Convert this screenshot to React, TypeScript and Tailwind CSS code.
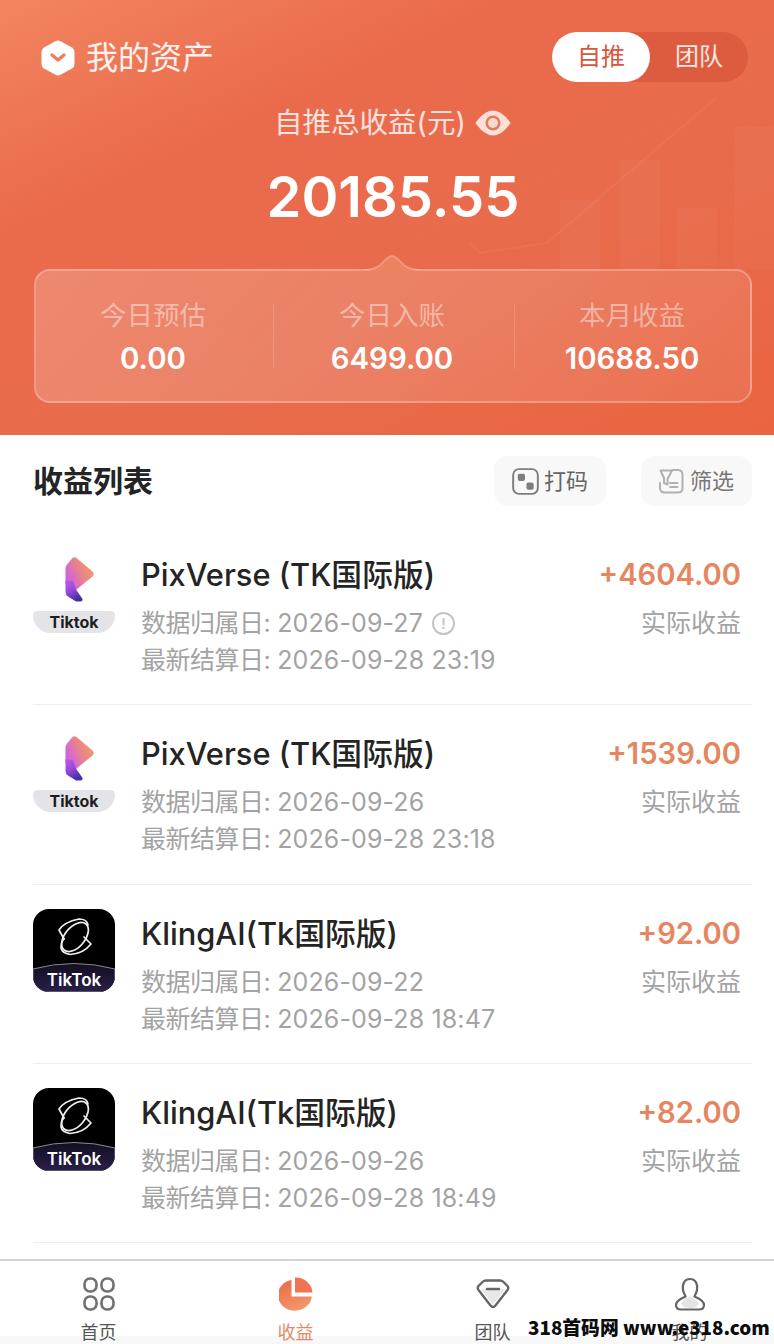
import React from "react";

const cjk = "font-['Inter','Noto_Sans_CJK_SC',sans-serif]";

type Row = { logo: "pix" | "kling"; title: string; amount: string; day: string; settled: string; info?: boolean };

const rows: Row[] = [
  { logo: "pix", title: "PixVerse (TK国际版)", amount: "+4604.00", day: "2026-09-27", settled: "2026-09-28 23:19", info: true },
  { logo: "pix", title: "PixVerse (TK国际版)", amount: "+1539.00", day: "2026-09-26", settled: "2026-09-28 23:18" },
  { logo: "kling", title: "KlingAI(Tk国际版)", amount: "+92.00", day: "2026-09-22", settled: "2026-09-28 18:47" },
  { logo: "kling", title: "KlingAI(Tk国际版)", amount: "+82.00", day: "2026-09-26", settled: "2026-09-28 18:49" },
];

function PixLogo({ id }: { id: string }) {
  return (
    <div className="relative h-[84px] w-[82px] shrink-0">
      <svg viewBox="0 0 82 84" className="absolute left-0 top-0 h-[84px] w-[82px]">
        <defs>
          <linearGradient id={`${id}a`} x1="1" y1="0.1" x2="0" y2="0.6">
            <stop offset="0" stopColor="#f0a066" />
            <stop offset="0.5" stopColor="#ea8488" />
            <stop offset="1" stopColor="#cc5ee8" />
          </linearGradient>
          <linearGradient id={`${id}b`} x1="0" y1="0" x2="0.5" y2="1">
            <stop offset="0" stopColor="#c658e6" />
            <stop offset="0.5" stopColor="#9a48dc" />
            <stop offset="1" stopColor="#46309e" />
          </linearGradient>
        </defs>
        <g transform="translate(2 0)">
          <path d="M37.5 8 Q39.5 6.5 41.5 8 L57.5 21.5 Q60 24 57.5 26.5 L41 40 L30.5 34 L30.5 19 Q30.5 16.5 32 14.5 Z" fill={`url(#${id}a)`} />
          <path d="M30.5 30 L38 31 L41 39.5 L47.5 49 Q48 51.5 45 51.5 L41 51.5 L33 46.5 Q30.5 45 30.5 42 Z" fill={`url(#${id}b)`} />
        </g>
      </svg>
      <div className="absolute bottom-[1px] left-0 flex h-[22px] w-[82px] items-center justify-center rounded-b-[24px] rounded-t-[6px] bg-[#e4e4e8] text-[16px] font-bold leading-none text-[#1d1d1f]">
        Tiktok
      </div>
    </div>
  );
}

function KlingLogo({ id }: { id: string }) {
  return (
    <div className="relative h-[83px] w-[82px] shrink-0 overflow-hidden rounded-[16px] bg-black">
      <svg viewBox="0 0 82 83" className="absolute left-0 top-0 h-[83px] w-[82px]" fill="none">
        <defs>
          <linearGradient id={`${id}k`} x1="0" y1="0" x2="0" y2="1">
            <stop offset="0" stopColor="#120e20" />
            <stop offset="1" stopColor="#2a2048" />
          </linearGradient>
        </defs>
        <g stroke="#f0f0f0" strokeWidth="1.7" strokeLinecap="round" strokeLinejoin="round">
          <path d="M31 30 L26 21 Q31 13 46 10 Q54 10 55 16" />
          <path d="M51 28 L58 35 Q50 45 37 45.5 Q29 44 28 39 Q28 33 31 30" />
          <ellipse cx="42" cy="28" rx="17" ry="10" transform="rotate(-50 42 28)" />
        </g>
        <path d="M0 60 Q41 49 82 60 L82 83 L0 83 Z" fill={`url(#${id}k)`} stroke="#8a8694" strokeWidth="1" />
      </svg>
      <div className="absolute bottom-0 left-0 w-full text-center text-[17px] font-semibold leading-[24px] text-white">TikTok</div>
    </div>
  );
}

function ListRow({ row, id }: { row: Row; id: string }) {
  return (
    <div className="flex h-[179.33px] border-b border-[#eeeeee] pt-[24px]">
      {row.logo === "pix" ? <PixLogo id={id} /> : <KlingLogo id={id} />}
      <div className="ml-[26px] min-w-0 flex-1 pt-[6px]">
        <div className="whitespace-nowrap text-[30.8px] font-medium leading-[38px] text-[#242424]">{row.title}</div>
        <div className="mt-[11px] flex items-center whitespace-nowrap text-[25px] leading-[37px] text-[#a3a3a3]">
          <span className="tracking-[-0.5px]">数据归属日:</span>
          <span className="ml-[7px] tracking-[0.12px]">{row.day}</span>
          {row.info && (
            <span className="ml-[9px] flex h-[23px] w-[23px] items-center justify-center rounded-full border-2 border-[#c4c4c4] text-[14px] font-semibold leading-none text-[#c4c4c4]">
              !
            </span>
          )}
        </div>
        <div className="flex whitespace-nowrap text-[25px] leading-[37px] text-[#a3a3a3]">
          <span className="tracking-[-0.5px]">最新结算日:</span>
          <span className="ml-[7px] tracking-[0.12px]">{row.settled}</span>
        </div>
      </div>
      <div className="mr-[11px] flex flex-col items-end pt-[6px]">
        <div className="whitespace-nowrap text-[29.2px] font-semibold leading-[38px] text-[#e58660]">{row.amount}</div>
        <div className="mt-[11px] whitespace-nowrap text-[25px] leading-[37px] text-[#a3a3a3]">实际收益</div>
      </div>
    </div>
  );
}

function Stat({ label, value, width, divider }: { label: string; value: string; width: string; divider?: boolean }) {
  return (
    <div className={`relative flex flex-col items-center pt-[25px] ${width}`}>
      {divider && <div className="absolute left-0 top-[32px] h-[66px] w-px bg-white/15" />}
      <div className="text-[26.5px] leading-[38px] text-white/45">{label}</div>
      <div className="mt-[6px] text-[29.4px] font-semibold leading-[38px] text-white">{value}</div>
    </div>
  );
}

function Tab({ label, active, children }: { label: string; active?: boolean; children: React.ReactNode }) {
  return (
    <div className="flex w-[197px] flex-col items-center">
      <div className="flex h-[36px] items-center justify-center">{children}</div>
      <div className={`mt-[9px] text-[18px] leading-[24px] ${active ? "text-[#e08a68]" : "text-[#555555]"}`}>{label}</div>
    </div>
  );
}

export default function App() {
  return (
    <div className={`relative h-[1344px] w-[774px] overflow-hidden bg-white ${cjk}`}>
      {/* Header */}
      <section className="relative h-[435px] overflow-hidden bg-[linear-gradient(155deg,#f2855f_0%,#ea6a4c_30%,#e86c4c_62%,#ea6440_100%)]">
        {/* faint rising chart behind the total */}
        <svg viewBox="0 0 774 435" className="absolute left-0 top-0 h-[435px] w-[774px]" fill="none">
          <g fill="#ffffff" fillOpacity="0.03">
            <rect x="560" y="200" width="40" height="70" />
            <rect x="620" y="160" width="40" height="110" />
            <rect x="677" y="208" width="40" height="62" />
            <rect x="735" y="127" width="39" height="143" />
          </g>
          <path d="M470 243 L480 253 L547 243 L620 180 L717 97" stroke="#ffffff" strokeOpacity="0.05" strokeWidth="2" />
        </svg>

        <div className="relative flex items-start justify-between pl-[41px] pr-[26px] pt-[32px]">
          <div className="flex items-center gap-[11px] pt-[6px]">
            <svg viewBox="0 0 34 36" className="h-[36px] w-[34px]">
              <path d="M14.5 1.2 Q17 0 19.5 1.2 L31 7.5 Q33.5 9 33.5 12 L33.5 24 Q33.5 27 31 28.5 L19.5 34.8 Q17 36 14.5 34.8 L3 28.5 Q0.5 27 0.5 24 L0.5 12 Q0.5 9 3 7.5 Z" fill="#ffffff" />
              <path d="M11 15 L17 20 L23 15" fill="none" stroke="#e9805c" strokeWidth="3.4" strokeLinecap="round" strokeLinejoin="round" />
            </svg>
            <span className="text-[32px] leading-[40px] text-white/90">我的资产</span>
          </div>
          <div className="flex h-[50px] w-[196px] rounded-full bg-[#dd5c3f]">
            <div className="flex w-[98px] items-center justify-center rounded-full bg-white text-[24px] text-[#d8563a]">自推</div>
            <div className="flex w-[98px] items-center justify-center text-[24px] text-white/85">团队</div>
          </div>
        </div>

        <div className="relative mt-[21px] flex items-center justify-center gap-[9px] pl-[11px]">
          <span className="text-[28.5px] leading-[40px] text-white/80">自推总收益(元)</span>
          <svg viewBox="0 0 36 28" className="h-[28px] w-[36px]">
            <path d="M1.5 14 Q18 -9 34.5 14 Q18 37 1.5 14 Z" fill="#fbdfd7" stroke="#fbdfd7" strokeWidth="2" strokeLinejoin="round" />
            <circle cx="18" cy="14" r="7.5" fill="#e07a60" />
            <circle cx="18" cy="14" r="5" fill="#f9d9cf" />
          </svg>
        </div>

        <div className="relative ml-[12px] mt-[19px] text-center text-[56px] font-semibold leading-[70px] text-white">20185.55</div>

        {/* Summary card */}
        <div className="relative mx-[34px] mt-[37px] h-[134px] w-[718px] rounded-[16px] border-2 border-white/25 bg-[linear-gradient(135deg,rgba(255,255,255,0.2),rgba(255,255,255,0.08))]">
          <svg viewBox="0 0 56 18" className="absolute left-[328px] top-[-16px] h-[18px] w-[56px]">
            <path d="M0 15 Q10 15 16 10 L24 2.5 Q28 -0.5 32 2.5 L40 10 Q46 15 56 15 L56 18 L0 18 Z" fill="#ec8262" />
            <path d="M0 15 Q10 15 16 10 L24 2.5 Q28 -0.5 32 2.5 L40 10 Q46 15 56 15" fill="none" stroke="#ffffff" strokeOpacity="0.25" strokeWidth="2" />
          </svg>
          <div className="flex h-full">
            <Stat label="今日预估" value="0.00" width="w-[237px] pr-[3px]" />
            <Stat label="今日入账" value="6499.00" width="w-[241px] pr-[3px]" divider />
            <Stat label="本月收益" value="10688.50" width="flex-1" divider />
          </div>
        </div>
      </section>

      {/* List */}
      <section className="pl-[33px] pr-[22px]">
        <div className="flex h-[92px] items-center justify-between">
          <h2 className="mt-[1px] text-[30px] font-bold text-[#242424]">收益列表</h2>
          <div className="flex gap-[35px]">
            <div className="flex h-[50px] w-[112px] items-center justify-center gap-[5px] rounded-[14px] bg-[#f8f8f8] text-[22px] text-[#666666]">
              <svg viewBox="0 0 28 28" className="h-[27px] w-[27px]" fill="none">
                <rect x="1.2" y="1.2" width="25.6" height="25.6" rx="6" stroke="#7d7d7d" strokeWidth="2" />
                <rect x="6" y="6" width="7.5" height="7.5" rx="2" fill="#7d7d7d" />
                <rect x="15" y="15" width="7.5" height="7.5" rx="2" fill="#7d7d7d" />
              </svg>
              打码
            </div>
            <div className="flex h-[50px] w-[111px] items-center justify-center gap-[6px] rounded-[14px] bg-[#f8f8f8] text-[22px] text-[#777777]">
              <svg viewBox="0 0 25 25" className="h-[25px] w-[25px]" fill="none" stroke="#b0b0b0" strokeWidth="2" strokeLinejoin="round" strokeLinecap="round">
                <path d="M14 1 L19 1 Q23.5 1 23.5 6 L23.5 19 Q23.5 23.5 19 23.5 L6 23.5 Q1 23.5 1 19 L1 14" />
                <path d="M1.5 1.5 L13 1.5 L8.5 10 L8.5 15.5 L5 14 L5 9 Z" />
                <path d="M11 14 L18.5 14 M11 18 L18.5 18" />
              </svg>
              筛选
            </div>
          </div>
        </div>
        <div className="mt-[-1px]">
          {rows.map((r, i) => (
            <ListRow key={r.title + r.day} row={r} id={`logo${i}`} />
          ))}
        </div>
      </section>

      {/* Bottom tabs */}
      <nav className="absolute bottom-0 left-0 h-[85px] w-[774px] overflow-hidden border-t-2 border-[#d4d4d4] bg-[linear-gradient(to_bottom,#ffffff_90%,#f8f8f8_90%)] pt-[15px]">
        <div className="flex w-[788px]">
          <Tab label="首页">
            <svg viewBox="0 0 32 34" className="h-[34px] w-[32px]" fill="none" stroke="#707070" strokeWidth="2.6">
              <rect x="1.5" y="1.5" width="12" height="13" rx="5.5" />
              <rect x="18.5" y="1.5" width="12" height="13" rx="5.5" />
              <rect x="1.5" y="19.5" width="12" height="13" rx="5.5" />
              <rect x="18.5" y="19.5" width="12" height="13" rx="5.5" />
            </svg>
          </Tab>
          <Tab label="收益" active>
            <svg viewBox="0 0 34 34" className="h-[34px] w-[34px]">
              <defs>
                <linearGradient id="pie" x1="0" y1="0" x2="0.5" y2="1">
                  <stop offset="0" stopColor="#ec6a40" />
                  <stop offset="1" stopColor="#f2956a" />
                </linearGradient>
              </defs>
              <path d="M12.5 3 L12.5 19.5 L32.8 19.5 A17 15.5 0 1 1 12.5 3 Z" fill="url(#pie)" />
              <path d="M16 0.5 A17 16 0 0 1 33.5 15.5 L16 15.5 Z" fill="#ee7550" />
            </svg>
          </Tab>
          <Tab label="团队">
            <svg viewBox="0 0 34 30" className="h-[30px] w-[34px]" fill="none">
              <path d="M5 10 L29 10 L17 26 Z" fill="#e8e8e8" />
              <path d="M10 1.5 L24 1.5 Q26 1.5 27.5 3 L31.5 7 Q33 9 31.5 11 L19.5 26.5 Q17 29.5 14.5 26.5 L2.5 11 Q1 9 2.5 7 L6.5 3 Q8 1.5 10 1.5 Z" stroke="#666666" strokeWidth="2.4" />
              <path d="M11 10 L23 10" stroke="#666666" strokeWidth="2.4" strokeLinecap="round" />
            </svg>
          </Tab>
          <Tab label="我的">
            <svg viewBox="0 0 32 34" className="h-[34px] w-[32px]" fill="none">
              <path d="M7 26 Q12 20 16 20 Q20 20 25 26 Q24 31 16 31 Q8 31 7 26 Z" fill="#e4e4e4" />
              <path d="M16 2 C22 2 24 8 23 13 C22.5 16 21 18 20.5 19.5 C24 21 30 23 30 28 C30 31 28 32.5 25 32.5 L7 32.5 C4 32.5 2 31 2 28 C2 23 8 21 11.5 19.5 C11 18 9.5 16 9 13 C8 8 10 2 16 2 Z" stroke="#666666" strokeWidth="2.2" />
            </svg>
          </Tab>
        </div>
      </nav>

      {/* Site stamp laid over the tab bar corner */}
      <div className="absolute left-[528px] top-[1316px] whitespace-nowrap font-['Noto_Sans_CJK_SC',sans-serif] text-[18.8px] font-black leading-[22px] text-[#0c0c0c]">
        318首码网 www.e318.com
      </div>
    </div>
  );
}
